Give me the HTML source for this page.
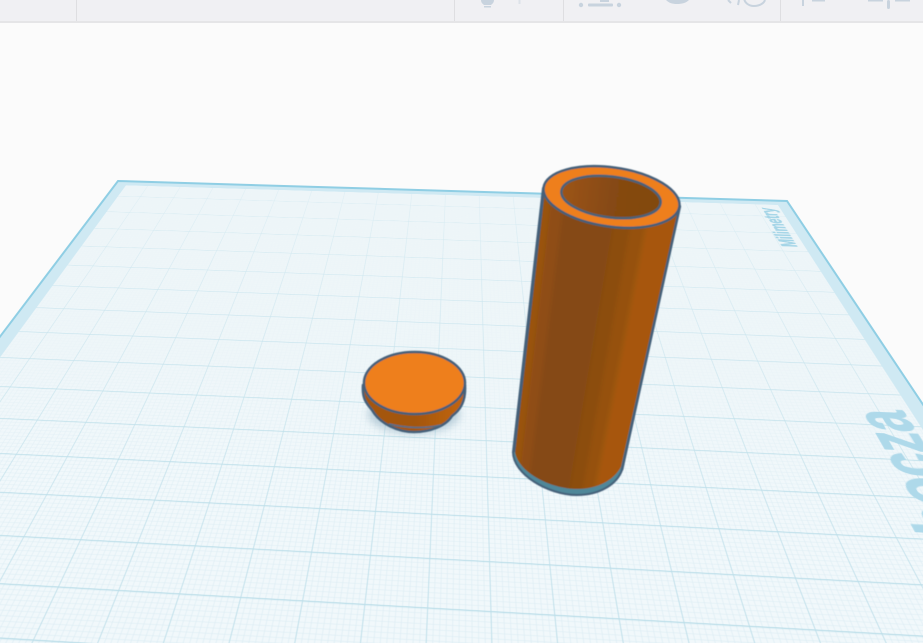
<!DOCTYPE html>
<html lang="pl">
<head>
<meta charset="utf-8">
<title>Płaszczyzna robocza</title>
<style>
html,body{margin:0;padding:0;width:923px;height:643px;overflow:hidden;background:#fbfbfb}
#stage{position:relative;width:923px;height:643px;overflow:hidden;background:#fbfbfb;contain:paint}
#plane{position:absolute;left:0;top:0;width:1000px;height:1000px;transform-origin:0 0;
transform:matrix3d(.63581,.011524,0,-.00004217,-.28577,.17116,0,-.00061343,0,0,1,0,118,181,0,1)}
#plane svg{display:block}
#over{position:absolute;left:0;top:0}
#bar{position:absolute;left:0;top:0;width:923px;height:21px;background:#f0f0f3;border-bottom:2px solid #e5e5e7}
.d{position:absolute;top:0;width:1px;height:21px;background:#dedee1}
</style>
</head>
<body>
<div id="stage">
  <div id="plane">
    <svg width="1000" height="1000" viewBox="0 0 1000 1000" xmlns="http://www.w3.org/2000/svg">
      <defs>
        <pattern id="mi" width="5" height="5" patternUnits="userSpaceOnUse">
          <rect width="5" height="5" fill="#f1f8fb"/>
          <path d="M0 0H5M0 0V5" stroke="#dcedf3" stroke-width="1" fill="none"/>
        </pattern>
        <pattern id="ma" width="50" height="50" patternUnits="userSpaceOnUse">
          <path d="M0 0H50" stroke="#bcdee9" stroke-width="2.600" fill="none"/>
          <path d="M0 0V50" stroke="#bcdee9" stroke-width="1.300" fill="none"/>
        </pattern>
        <linearGradient id="f1" x1="0" y1="0" x2="0" y2="1">
          <stop offset="0" stop-color="#edf5f8" stop-opacity=".97"/>
          <stop offset=".4" stop-color="#edf5f8" stop-opacity=".75"/>
          <stop offset=".62" stop-color="#edf5f8" stop-opacity="0"/>
        </linearGradient>
        <linearGradient id="f2" x1="0" y1="0" x2="0" y2="1">
          <stop offset="0" stop-color="#edf5f8" stop-opacity=".6"/>
          <stop offset=".6" stop-color="#edf5f8" stop-opacity="0"/>
        </linearGradient>
      </defs>
      <rect width="1000" height="1000" fill="url(#mi)"/>
      <rect width="1000" height="1000" fill="url(#f1)"/>
      <rect width="1000" height="1000" fill="url(#ma)"/>
      <rect width="1000" height="1000" fill="url(#f2)"/>
      <path d="M0 0H1000V1000H0ZM17 14V1000H983V14Z" fill="#cfe9f3" fill-rule="evenodd"/>
      <text transform="translate(975,476.500) rotate(-90) scale(.79,1)" text-anchor="end" font-family="Liberation Sans, sans-serif" font-weight="bold" font-size="76" fill="#aed9ea" stroke="#aed9ea" stroke-width="1.500">Płaszczyzna robocza</text>
      <text transform="translate(973,24.400) rotate(-90) scale(.9,1)" text-anchor="end" font-family="Liberation Sans, sans-serif" font-weight="bold" font-size="29" fill="#a5d5e7" stroke="#a5d5e7" stroke-width="1">Milimetry</text>
    </svg>
  </div>

  <svg id="over" width="923" height="643" viewBox="0 0 923 643" xmlns="http://www.w3.org/2000/svg">
    <defs>
      <linearGradient id="hole" gradientUnits="userSpaceOnUse" x1="562" y1="195" x2="661" y2="195">
        <stop offset="0" stop-color="#9c5414"/>
        <stop offset=".5" stop-color="#864a12"/>
        <stop offset="1" stop-color="#824810"/>
      </linearGradient>
      <linearGradient id="side" gradientUnits="userSpaceOnUse" x1="363" y1="400" x2="466" y2="400">
        <stop offset="0" stop-color="#a55710"/>
        <stop offset=".5" stop-color="#a35610"/>
        <stop offset="1" stop-color="#c4660f"/>
      </linearGradient>
      <filter id="b" x="-30%" y="-50%" width="160%" height="200%"><feGaussianBlur stdDeviation="4"/></filter>
      <filter id="s" x="-5%" y="-5%" width="110%" height="110%"><feGaussianBlur stdDeviation=".5"/></filter>
      <filter id="f" x="-10%" y="-5%" width="120%" height="110%"><feGaussianBlur stdDeviation="2.500"/></filter>
      <clipPath id="cb"><path d="M544 188L515 452C518 472 550 489 577 489C598 489 614 480 621 467L679 206Z"/></clipPath>
    </defs>

    <path d="M-20 363L118 181L787 201L940 430" fill="none" stroke="#8fcee4" stroke-width="2"/>

    <g filter="url(#s)">
      <!-- disc -->
      <ellipse cx="414" cy="414" rx="46" ry="20" fill="#7fa3b8" opacity=".45" filter="url(#b)"/>
      <path d="M363 385C362 398 366 403 372 410C380 424 398 432 414 432C430 432 446 426 452 416C460 410 466 402 465 385Z" fill="url(#side)" stroke="#456079" stroke-width="2.500" stroke-linejoin="round"/>
      <path d="M389 424C405 428 425 429 441 425" fill="none" stroke="#4d6f8c" stroke-width="1.500"/>
      <ellipse cx="414.500" cy="383" rx="50.500" ry="31" fill="#ee7f1f" stroke="#456079" stroke-width="2.500"/>

      <!-- cylinder -->
      <path d="M543 188L513 452C513 474 548 495 577 495C600 495 617 484 622 470L680 206Z" fill="#4f8799" stroke="#456079" stroke-width="2" stroke-linejoin="round"/>
      <g clip-path="url(#cb)">
        <g filter="url(#f)">
          <polygon points="530,160 555.600,160 516.900,500 500,500" fill="#9a5211"/>
          <polygon points="555.600,160 569.500,160 527.100,500 516.900,500" fill="#8f4e12"/>
          <polygon points="569.500,160 623.800,160 567.200,500 527.100,500" fill="#854a12"/>
          <polygon points="623.800,160 641.900,160 580.500,500 567.200,500" fill="#8c4d11"/>
          <polygon points="641.900,160 658.600,160 592.900,500 580.500,500" fill="#96510f"/>
          <polygon points="658.600,160 700,160 630,500 592.900,500" fill="#a75711"/>
        </g>
      </g>
      <path d="M544 188L514 452" fill="none" stroke="#456079" stroke-width="2.500"/>
      <path d="M680 206L622 470" fill="none" stroke="#456079" stroke-width="2.500"/>
      <ellipse cx="611.500" cy="197" rx="68.500" ry="29.500" transform="rotate(8 611.500 197)" fill="#ee7f1f" stroke="#456079" stroke-width="2.500"/>
      <ellipse cx="611" cy="197" rx="50" ry="20.500" transform="rotate(7 611 197)" fill="url(#hole)" stroke="#4a6379" stroke-width="2.500"/>
    </g>
  </svg>

  <div id="bar">
    <div class="d" style="left:76px"></div>
    <div class="d" style="left:454px"></div>
    <div class="d" style="left:563px"></div>
    <div class="d" style="left:780px"></div>
    <svg width="923" height="21" viewBox="0 0 923 21" style="position:absolute;left:0;top:0" xmlns="http://www.w3.org/2000/svg">
      <g fill="#c8d3de">
        <path d="M481 0H494C494 3 492 4 491 5H484C483 4 481 3 481 0Z"/>
        <rect x="484" y="6" width="7" height="1.500"/>
        <rect x="518.500" y="0" width="2" height="4" fill="#dde2e8"/>
        <circle cx="581" cy="5" r="2.200"/>
        <circle cx="619" cy="5" r="2.200"/>
        <rect x="588" y="3.500" width="25" height="3" rx="1"/>
        <rect x="600" y="0" width="9" height="2"/>
        <path d="M666 0H689C686 3 682 4 677 4C672 4 669 3 666 0Z"/>
        <rect x="802" y="0" width="2" height="6"/>
        <rect x="812" y="0" width="13" height="1.500"/>
        <rect x="887" y="0" width="3" height="9" rx="1.500"/>
        <rect x="868" y="0" width="15" height="1.500"/>
        <rect x="895" y="0" width="15" height="1.500"/>
      </g>
      <path d="M744 -3C744 3 749 6 754 6C760 6 764 3 765 0" fill="none" stroke="#c8d3de" stroke-width="2"/>
      <path d="M731 3L728 0M739 0L738 5" fill="none" stroke="#c8d3de" stroke-width="2"/>
    </svg>
  </div>
</div>
</body>
</html>
